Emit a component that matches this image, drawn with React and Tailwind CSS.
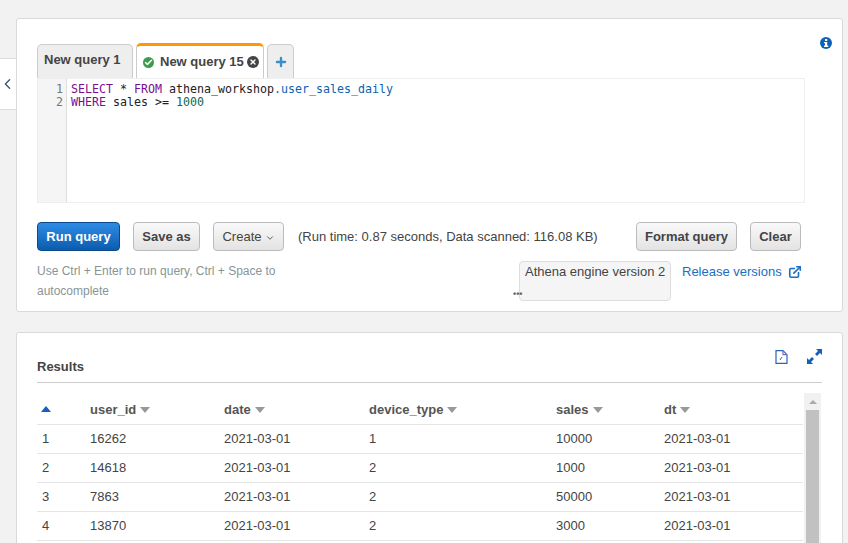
import React from 'react';
import { ChevronLeft, ChevronDown, Plus, ExternalLink, Check, X } from 'lucide-react';

const rows = [
  ['1', '16262', '2021-03-01', '1', '10000', '2021-03-01'],
  ['2', '14618', '2021-03-01', '2', '1000', '2021-03-01'],
  ['3', '7863', '2021-03-01', '2', '50000', '2021-03-01'],
  ['4', '13870', '2021-03-01', '2', '3000', '2021-03-01'],
];

const Caret = () => <span className="ml-1 inline-block w-0 h-0 border-x-[5px] border-x-transparent border-t-[6px] border-t-[#999] align-[1px]" />;

const GrayBtn = ({ className, children }) => (
  <button className={`h-[29px] shrink-0 rounded border border-[#bbb] bg-gradient-to-b from-[#f9f9f9] to-[#e3e3e3] text-[13px] text-[#444] flex items-center justify-center ${className}`}>
    {children}
  </button>
);

export default function App() {
  return (
    <div className="h-[543px] w-[848px] overflow-hidden bg-[#f2f2f2] flex text-[13px] text-[#444] font-['Liberation_Sans',Arial,sans-serif]">
      <div className="w-4 shrink-0 pt-[58px]">
        <div className="h-[52px] w-4 bg-white border-y border-[#ddd] flex items-center justify-center text-[#44586c]">
          <ChevronLeft size={20} strokeWidth={2} className="ml-[-1px]" />
        </div>
      </div>

      <div className="w-[827px] shrink-0 pt-[18px] flex flex-col gap-5">
        <section className="relative h-[294px] shrink-0 bg-white border border-[#d9d9d9] rounded-[3px] pl-5 pr-[38px] pt-6">
          <svg className="absolute right-[10px] top-[18px]" width="12" height="12" viewBox="0 0 12 12">
            <circle cx="6" cy="6" r="6" fill="#0f62b8" />
            <rect x="5" y="2" width="2.2" height="2" fill="#fff" />
            <path d="M4 5h3.2v3.6H8.2V10H4V8.6h1V6.2H4z" fill="#fff" />
          </svg>

          <div className="flex items-end h-[35px] gap-[3px]">
            <div className="w-[96px] h-[34px] shrink-0 bg-[#eee] border border-b-0 border-[#ccc] rounded-t-[5px] pl-[6px] pt-[5px] font-bold text-[#444] whitespace-nowrap">New query 1</div>
            <div className="w-[128px] h-[35px] shrink-0 bg-white border-x border-[#ccc] border-t-[3px] border-t-[#f90] rounded-t-[5px] flex items-center pl-[6px] font-bold text-[#444] whitespace-nowrap">
              <span className="w-[11px] h-[11px] rounded-full bg-[#3b9c4c] flex items-center justify-center mr-[6px] shrink-0">
                <Check size={9} strokeWidth={4} className="text-white" />
              </span>
              <span className="w-[83px] shrink-0">New query 15</span>
              <span className="w-[12px] h-[12px] rounded-full bg-[#444] flex items-center justify-center ml-[4px] shrink-0">
                <X size={8} strokeWidth={4} className="text-white" />
              </span>
            </div>
            <div className="w-[27px] h-[34px] shrink-0 bg-[#eee] border border-b-0 border-[#ccc] rounded-t-[5px] flex items-center justify-center text-[#3a8fc9]">
              <Plus size={14} strokeWidth={4} />
            </div>
          </div>

          <div className="w-[768px] h-[125px] border border-[#eee] flex font-['DejaVu_Sans_Mono','Liberation_Mono',monospace] text-[11.63px] leading-[13px]">
            <div className="w-[29px] shrink-0 bg-[#f5f5f5] border-r border-[#ddd] text-right pr-[3px] pt-[4px] text-[#777]">
              <div>1</div>
              <div>2</div>
            </div>
            <div className="pl-1 pt-[4px] text-[#222] whitespace-pre">
              <div><span className="text-[#7a0f8f]">SELECT</span> * <span className="text-[#7a0f8f]">FROM</span> athena_workshop<span className="text-[#0b62b0]">.user_sales_daily</span></div>
              <div><span className="text-[#7a0f8f]">WHERE</span> sales &gt;= <span className="text-[#0a6a4f]">1000</span></div>
            </div>
          </div>

          <div className="flex items-center mt-[19px] h-[29px]">
            <button className="w-[83px] h-[29px] shrink-0 rounded border border-[#0a4a8a] bg-gradient-to-b from-[#2e8ce6] to-[#0b5cad] text-white font-bold text-[13px]">Run query</button>
            <GrayBtn className="w-[67px] ml-[13px] font-bold">Save as</GrayBtn>
            <GrayBtn className="w-[71px] ml-[13px]">
              Create
              <ChevronDown size={10} strokeWidth={2} className="ml-[3px] mt-[2px]" />
            </GrayBtn>
            <span className="ml-[14px] w-[299px] shrink-0 whitespace-nowrap">(Run time: 0.87 seconds, Data scanned: 116.08 KB)</span>
            <GrayBtn className="w-[101px] ml-[39px] font-bold">Format query</GrayBtn>
            <GrayBtn className="w-[51px] ml-[13px] font-bold">Clear</GrayBtn>
          </div>

          <div className="flex items-start mt-[10px]">
            <p className="w-[260px] shrink-0 text-[12px] leading-[20px] text-[#879596]">Use Ctrl + Enter to run query, Ctrl + Space to autocomplete</p>
            <div className="relative ml-[222px] w-[152px] h-[40px] shrink-0 bg-[#f5f5f5] border border-[#ddd] rounded px-[5px] leading-[20px] whitespace-nowrap">
              Athena engine version 2
              <span className="absolute left-[-7px] bottom-[1px] text-[9px] leading-[9px] font-bold text-[#666]">•••</span>
            </div>
            <a className="ml-[11px] mt-[1px] text-[#1b6ec2] leading-[20px] whitespace-nowrap flex items-center gap-[6px]">
              Release versions
              <ExternalLink size={14} strokeWidth={2.75} />
            </a>
          </div>
        </section>

        <section className="relative flex-1 bg-white border border-[#d9d9d9] rounded-t-[3px] pl-5 pr-5 pt-[26px]">
          <svg className="absolute right-[54px] top-[17px]" width="13" height="14" viewBox="0 0 13 14" fill="none">
            <path d="M1 .7h7l4 4v8.6H1z" stroke="#2a66b8" strokeWidth="1.2" />
            <path d="M8 .7v4h4" stroke="#7d6ab8" strokeWidth="1.2" />
            <path d="M5 10l2-3" stroke="#7d4a8a" strokeWidth="1" />
          </svg>
          <svg className="absolute right-[20px] top-[16px]" width="15" height="15" viewBox="0 0 15 15">
            <path d="M9 0h6v6l-2-2-3 3-2-2 3-3z" fill="#1560bd" />
            <path d="M6 15H0V9l2 2 3-3 2 2-3 3z" fill="#1560bd" />
          </svg>

          <h2 className="font-bold text-[13px] leading-[16px] text-[#444] pb-[7px] border-b border-[#ccc]">Results</h2>

          <div className="flex mt-[10px]">
            <div className="w-[766px] shrink-0">
              <div className="grid grid-cols-[53px_134px_145px_187px_108px_1fr] h-[32px] pt-[2px] items-center border-b border-[#e5e5e5] font-bold text-[#555]">
                <span className="pl-[4px]"><span className="inline-block w-0 h-0 border-x-[5px] border-x-transparent border-b-[6px] border-b-[#1560bd] align-[2px]" /></span>
                <span>user_id<Caret /></span>
                <span>date<Caret /></span>
                <span>device_type<Caret /></span>
                <span>sales<Caret /></span>
                <span>dt<Caret /></span>
              </div>
              {rows.map((r) => (
                <div key={r[0]} className="grid grid-cols-[53px_134px_145px_187px_108px_1fr] h-[29px] items-center border-b border-[#e5e5e5] text-[#444]">
                  <span className="pl-[5px]">{r[0]}</span>
                  <span>{r[1]}</span>
                  <span>{r[2]}</span>
                  <span>{r[3]}</span>
                  <span>{r[4]}</span>
                  <span>{r[5]}</span>
                </div>
              ))}
            </div>
            <div className="ml-[1px] w-[17px] shrink-0 h-[200px] bg-[#f1f1f1] flex flex-col items-center">
              <div className="h-[17px] flex items-center">
                <span className="w-0 h-0 border-x-[4px] border-x-transparent border-b-[4px] border-b-[#aaa]" />
              </div>
              <div className="w-[13px] flex-1 bg-[#c1c1c1]" />
            </div>
          </div>
        </section>
      </div>
    </div>
  );
}
